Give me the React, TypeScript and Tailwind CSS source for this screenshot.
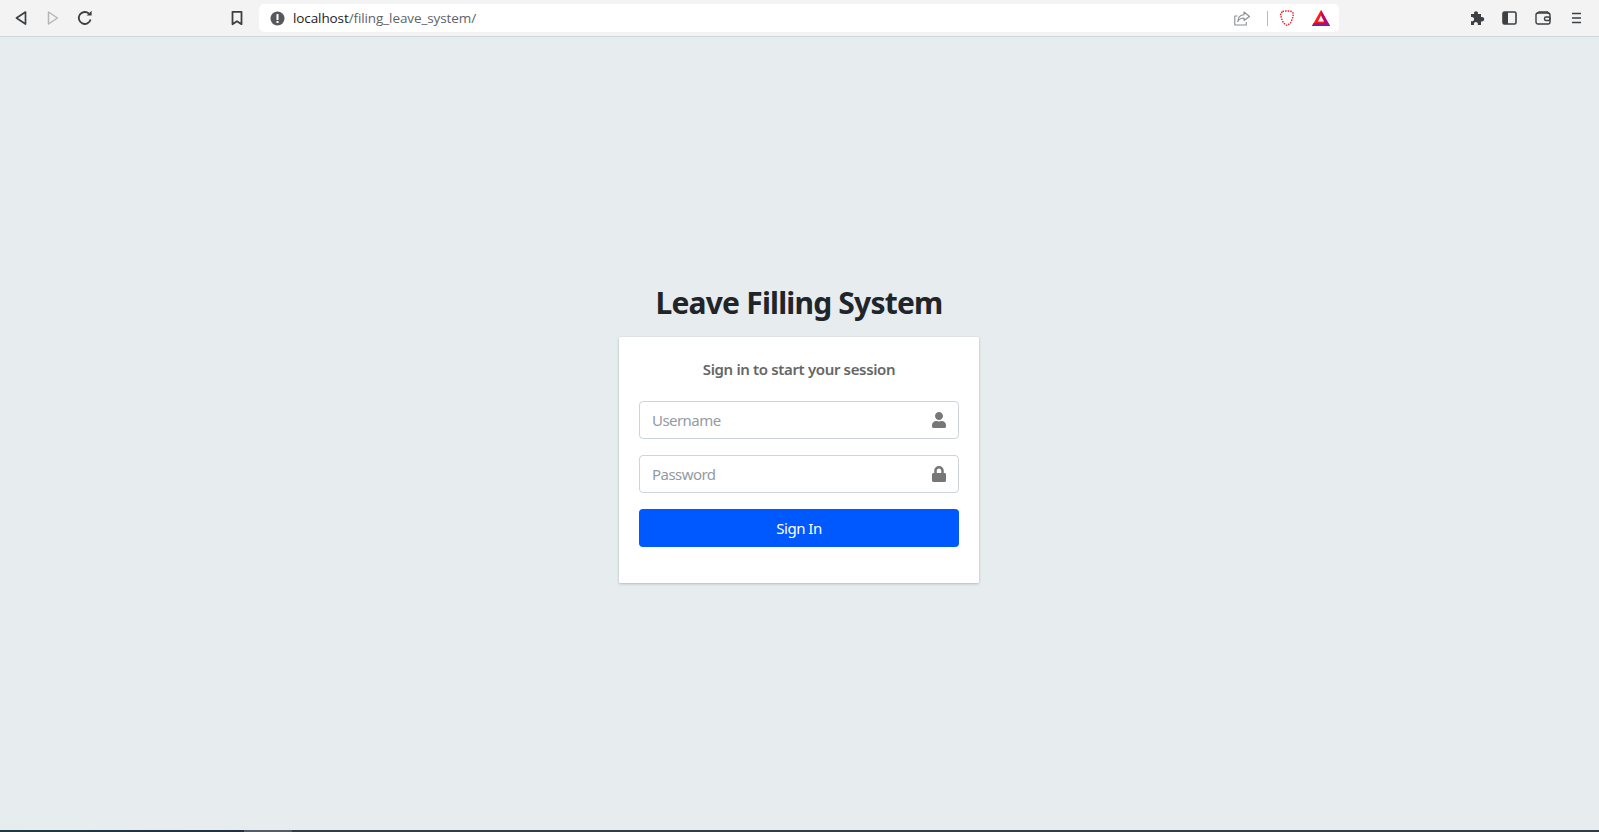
import { FaUser, FaLock } from "react-icons/fa";

function BrowserBar() {
  return (
    <header className="flex h-[37px] shrink-0 items-center border-b border-[#cfd6dc] bg-[#f3f3f3] text-[#3c4043]">
      <div className="ml-[14px] flex items-center">
        <svg width="14" height="16" viewBox="0 0 14 16" fill="none" stroke="#3c4043" strokeWidth="1.7" strokeLinejoin="round">
          <path d="M11.5 2 2.5 8l9 6z" />
        </svg>
        <svg className="ml-[18px]" width="14" height="16" viewBox="0 0 14 16" fill="none" stroke="#b4b6b8" strokeWidth="1.5" strokeLinejoin="round">
          <path d="M2.5 2 11.5 8l-9 6z" />
        </svg>
        <svg className="ml-[17px]" width="16" height="16" viewBox="0 0 16 16" fill="none" stroke="#3c4043" strokeWidth="1.8">
          <path d="M13.6 9.5A6 6 0 1 1 12 3.7" />
          <path d="M9.6 5.6h5V.8z" fill="#3c4043" stroke="none" />
        </svg>
      </div>
      <svg className="ml-[137px]" width="14" height="16" viewBox="0 0 14 16" fill="none" stroke="#3c4043" strokeWidth="1.8" strokeLinejoin="round">
        <path d="M2.5 1.8h9v12.4L7 11.2l-4.500 3z" />
      </svg>
      <div className="ml-[15px] flex h-[28px] w-[1080px] items-center rounded-[5px] bg-white">
        <svg className="ml-[11px]" width="15" height="15" viewBox="0 0 15 15">
          <circle cx="7.500" cy="7.500" r="7" fill="#55595e" />
          <rect x="6.500" y="3" width="2" height="6" rx="0.500" fill="#fff" />
          <rect x="6.500" y="10" width="2" height="2" fill="#fff" />
        </svg>
        <span className="ml-[8px] font-['Open_Sans',sans-serif] text-[13.5px] tracking-[-0.1px] text-[#5f6368]">
          <span className="text-[#202124]">localhost</span>/filing_leave_system/
        </span>
        <div className="ml-auto flex items-center">
          <svg width="16" height="15" viewBox="0 0 16 15" fill="none" stroke="#8b8e91" strokeWidth="1.100" strokeLinejoin="round">
            <path d="M10 1 15.500 5.500 10 9.500V7C7 7 5 8 3.800 10.500 4 6.500 6.500 4 10 3.800z" />
            <path d="M3.500 5H.8v9h11.500v-3" />
          </svg>
          <div className="ml-[17px] h-[15px] w-px bg-[#b8babc]" />
          <svg className="ml-[11px]" width="16" height="17" viewBox="0 0 15 17" fill="none" stroke="#ee1c25" strokeWidth="1.400" strokeDasharray="1.500 1.100">
            <path d="M3 1.500 5 1h5l2 .5 2 2-1 5-2 4.500-3.500 2.500L4 13 2 8.500 1 3.500z" />
          </svg>
          <svg className="ml-[17px]" width="18" height="16" viewBox="0 0 18 16">
            <path d="M9 0 18 16H0z" fill="#ff1a1a" />
            <path d="M9 0 18 16H14L9 7z" fill="#c0046c" />
            <path d="M0 16h18l-1.600-3H1.600z" fill="#8a1a9c" />
            <path d="M9 5.500 12 11.500H6z" fill="#fff" />
          </svg>
          <div className="w-[9px]" />
        </div>
      </div>
      <div className="ml-auto mr-[17px] flex items-center">
        <svg width="16" height="16" viewBox="0 0 16 16" fill="#3c4043">
          <path d="M6 1.200c1.200 0 2 .8 2 1.800 0 .4-.1.700-.2 1H11v3.200c.3-.1.600-.2 1-.2 1.200 0 2.200.9 2.200 2.200S13.200 11.400 12 11.400c-.4 0-.7-.1-1-.2V15H7.700c.1-.3.200-.6.200-1 0-1.100-.9-2-2-2s-2 .9-2 2c0 .4.100.7.200 1H1v-4c.3.200.7.300 1.100.300 1.100 0 2-.9 2-2.100S3.200 7 2.100 7C1.700 7 1.300 7.100 1 7.300V4h3.200C4.100 3.700 4 3.400 4 3c0-1 .8-1.800 2-1.800z" />
        </svg>
        <svg className="ml-[16px]" width="15" height="14" viewBox="0 0 15 14">
          <rect x="1" y="1" width="13" height="12" rx="1.500" fill="none" stroke="#3c4043" strokeWidth="1.600" />
          <rect x="1" y="1" width="5" height="12" fill="#3c4043" />
        </svg>
        <svg className="ml-[18px]" width="16" height="14" viewBox="0 0 16 14" fill="none" stroke="#3c4043" strokeWidth="1.400">
          <rect x="1" y="2" width="14" height="11" rx="2" />
          <path d="M2 2.500 4 1h8.500L14 3" />
          <rect x="9.500" y="6" width="5.500" height="3.500" rx="1.500" />
        </svg>
        <svg className="ml-[20px]" width="11" height="12" viewBox="0 0 11 12" stroke="#3c4043" strokeWidth="1.400">
          <path d="M1 1.500h9M1 6h9M1 10.500h9" />
        </svg>
      </div>
    </header>
  );
}

function Field({ placeholder, type, icon }: { placeholder: string; type: string; icon: React.ReactNode }) {
  return (
    <div className="relative">
      <input
        type={type}
        placeholder={placeholder}
        className="block h-[38px] w-full rounded-[4px] border border-[#ced4da] bg-white py-[6px] pl-[12px] pr-[36px] font-['Noto_Sans',sans-serif] text-[15px] tracking-[-0.55px] text-[#495057] placeholder:text-[#939ba2]"
      />
      <span className="absolute right-[12px] top-1/2 -translate-y-1/2 text-[#777777]">{icon}</span>
    </div>
  );
}

function LoginBox() {
  return (
    <div className="w-[360px]">
      <h1 className="mb-[14px] text-center font-['Noto_Sans',sans-serif] text-[30px] leading-[40px] font-bold tracking-[-0.8px] text-[#212529]">
        Leave Filling System
      </h1>
      <form className="rounded-[1px] bg-white px-[20px] pt-[20px] pb-[36px] shadow-[0_0_1px_rgba(0,0,0,0.125),0_1px_3px_rgba(0,0,0,0.2)]">
        <p className="mb-[20px] text-center font-['Noto_Sans',sans-serif] text-[15px] leading-[24px] font-semibold tracking-[-0.35px] text-[#666666]">
          Sign in to start your session
        </p>
        <Field type="text" placeholder="Username" icon={<FaUser size={16} />} />
        <div className="h-[16px]" />
        <Field type="password" placeholder="Password" icon={<FaLock size={16} />} />
        <button
          type="button"
          className="mt-[16px] block h-[38px] w-full rounded-[4px] bg-[#0059ff] font-['Noto_Sans',sans-serif] text-[15px] tracking-[-0.5px] text-white"
        >
          Sign In
        </button>
      </form>
    </div>
  );
}

export default function App() {
  return (
    <div className="flex h-screen flex-col overflow-hidden bg-[#e7ecef]">
      <BrowserBar />
      <main className="flex flex-1 flex-col items-center justify-center pr-px pb-px">
        <LoginBox />
      </main>
      <div className="flex h-[2px] shrink-0">
        <div className="w-[244px] bg-gradient-to-r from-[#1f3a3f] to-[#20303f]" />
        <div className="w-[48px] bg-[#555c63]" />
        <div className="flex-1 bg-[#333d44]" />
      </div>
    </div>
  );
}
